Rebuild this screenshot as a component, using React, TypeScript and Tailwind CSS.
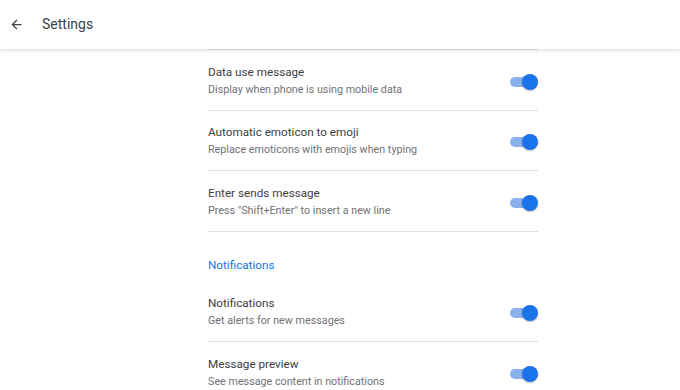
const rows1 = [
  { title: "Data use message", sub: "Display when phone is using mobile data" },
  { title: "Automatic emoticon to emoji", sub: "Replace emoticons with emojis when typing" },
  { title: "Enter sends message", sub: 'Press "Shift+Enter" to insert a new line' },
];

const rows2 = [
  { title: "Notifications", sub: "Get alerts for new messages" },
  { title: "Message preview", sub: "See message content in notifications" },
];

function Toggle() {
  return (
    <div className="relative mt-[2px] h-[16px] w-[28px] shrink-0">
      <div className="absolute left-0 top-[3px] h-[10px] w-[22px] rounded-full bg-[#8ab0ee]" />
      <div className="absolute right-0 top-0 h-[16px] w-[16px] rounded-full bg-[#1a73e8] shadow-[0_1px_2px_rgba(0,0,0,0.25)]" />
    </div>
  );
}

function Row({ title, sub, last }: { title: string; sub: string; last?: boolean }) {
  return (
    <div className={`flex h-[60.5px] items-center justify-between pt-[2px] ${last ? "" : "border-b border-[#e0e0e0]"}`}>
      <div className="flex flex-col gap-[3px]">
        <div className="text-[11.7px] leading-[15px] text-[#3c4043]">{title}</div>
        <div className="text-[10.75px] leading-[14px] text-[#6f7377]">{sub}</div>
      </div>
      <Toggle />
    </div>
  );
}

export default function App() {
  return (
    <div className="h-[390px] w-[680px] overflow-hidden bg-white font-['Roboto',sans-serif]">
      <header className="relative z-10 flex h-[49px] items-center gap-[18px] bg-white pl-[9px] shadow-[0_2px_3px_rgba(0,0,0,0.1)]">
        <svg width="15" height="15" viewBox="0 0 24 24" fill="#3c4043">
          <path d="M20 11H7.83l5.59-5.59L12 4l-8 8 8 8 1.41-1.41L7.83 13H20v-2z" />
        </svg>
        <span className="text-[14px] text-[#3c4043]">Settings</span>
      </header>
      <main className="mx-auto -mt-[10px] w-[330px] translate-x-[33px]">
        <div className="border-b border-[#e0e0e0] pt-[10px]" />
        {rows1.map((r) => (
          <Row key={r.title} {...r} />
        ))}
        <div className="h-[50px] pt-[26px] text-[11.7px] leading-[15px] text-[#1a73e8]">Notifications</div>
        {rows2.map((r, i) => (
          <Row key={r.title} {...r} last={i === rows2.length - 1} />
        ))}
      </main>
    </div>
  );
}
